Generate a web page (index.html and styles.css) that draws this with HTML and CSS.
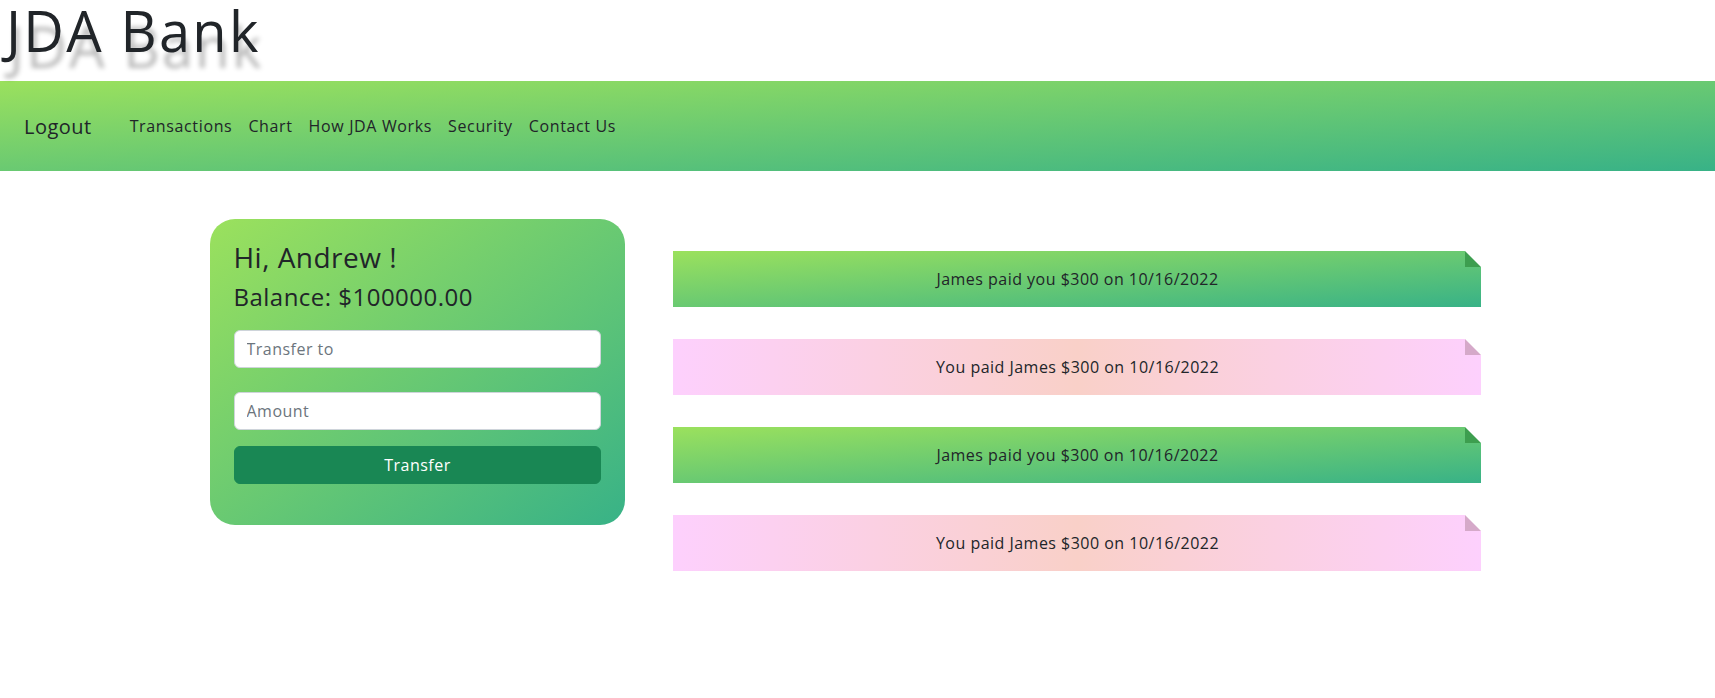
FILE: index.html
```html
<!DOCTYPE html>
<html lang="en">
<head>
<meta charset="utf-8">
<title>JDA Bank</title>
<link rel="stylesheet" href="styles.css">
</head>
<body>
  <header class="site-header">
    <h1 class="site-title">JDA Bank</h1>
  </header>
  <nav class="navbar">
    <a class="brand" href="#">Logout</a>
    <ul class="nav-links">
      <li><a class="nav-link" href="#">Transactions</a></li>
      <li><a class="nav-link" href="#">Chart</a></li>
      <li><a class="nav-link" href="#">How JDA Works</a></li>
      <li><a class="nav-link" href="#">Security</a></li>
      <li><a class="nav-link" href="#">Contact Us</a></li>
    </ul>
  </nav>
  <main class="container">
    <div class="row">
      <section class="col-side">
        <div class="account-card">
          <h3 class="greeting">Hi, Andrew !</h3>
          <h4 class="balance">Balance: $100000.00</h4>
          <form class="transfer-form">
            <input class="form-control first" type="text" placeholder="Transfer to">
            <input class="form-control second" type="text" placeholder="Amount">
            <button class="btn-transfer" type="button">Transfer</button>
          </form>
        </div>
      </section>
      <section class="col-main">
        <ul class="tx-list">
          <li class="tx tx-in">James paid you $300 on 10/16/2022</li>
          <li class="tx tx-out">You paid James $300 on 10/16/2022</li>
          <li class="tx tx-in">James paid you $300 on 10/16/2022</li>
          <li class="tx tx-out">You paid James $300 on 10/16/2022</li>
        </ul>
      </section>
    </div>
  </main>
</body>
</html>
```
FILE: styles.css
```css
* {
  box-sizing: border-box;
}

body {
  margin: 0;
  font-family: "Open Sans", "Noto Sans", sans-serif;
  color: #212529;
  background: #fff;
  letter-spacing: 0.03em;
}

.site-header {
  height: 81px;
}

.site-title {
  margin: 0;
  padding-left: 6px;
  font-size: 56px;
  font-weight: 400;
  line-height: 1.1;
  letter-spacing: 0.04em;
  color: #212529;
  text-shadow: 3px 16px 5px rgba(0, 0, 0, 0.28);
}

.navbar {
  height: 90px;
  display: flex;
  align-items: center;
  padding-left: 24px;
  background: linear-gradient(to bottom right, #9be15d, #38b287);
}

.brand {
  font-size: 20px;
  color: #212529;
  text-decoration: none;
  margin-right: 30px;
}

.nav-links {
  display: flex;
  list-style: none;
  margin: 0;
  padding: 0;
}

.nav-link {
  display: block;
  padding: 8px;
  font-size: 16px;
  letter-spacing: 0.04em;
  color: #212529;
  text-decoration: none;
}

.container {
  max-width: 1320px;
  margin: 48px auto 0;
  padding: 0 12px;
}

.row {
  display: flex;
  margin: 0 -12px;
}

.col-side {
  width: 33.3333%;
  padding: 0 12px;
}

.col-main {
  width: 66.6667%;
  padding: 0 12px;
}

.account-card {
  border-radius: 25px;
  padding: 22px 24px 41px;
  background: linear-gradient(to bottom right, #9be15d, #38b287);
}

.greeting {
  margin: 0 0 8px;
  font-size: 28px;
  font-weight: 400;
  line-height: 1.2;
}

.balance {
  margin: 0 0 19px;
  font-size: 24px;
  font-weight: 400;
  line-height: 1.2;
}

.transfer-form {
  display: flex;
  flex-direction: column;
}

.form-control {
  display: block;
  width: 100%;
  height: 38px;
  padding: 6px 12px;
  font-family: inherit;
  font-size: 16px;
  letter-spacing: 0.03em;
  color: #212529;
  background: #fff;
  border: 1px solid #ced4da;
  border-radius: 6px;
}

.form-control::placeholder {
  color: #6c757d;
}

.form-control.first {
  margin-bottom: 24px;
}

.form-control.second {
  margin-bottom: 16px;
}

.btn-transfer {
  height: 38px;
  font-family: inherit;
  font-size: 16px;
  letter-spacing: 0.03em;
  color: #fff;
  background: #198754;
  border: 1px solid #198754;
  border-radius: 6px;
}

.tx-list {
  list-style: none;
  margin: 0;
  padding: 32px 24px 0;
}

.tx {
  position: relative;
  height: 56px;
  margin-bottom: 32px;
  display: flex;
  align-items: center;
  justify-content: center;
  font-size: 16px;
  color: #212529;
}

.tx::before {
  content: "";
  position: absolute;
  top: 0;
  right: 0;
  width: 0;
  height: 0;
  border-style: solid;
  border-width: 0 16px 16px 0;
}

.tx-in {
  background: linear-gradient(to bottom right, #9be15d, #38b287);
}

.tx-in::before {
  border-color: #fff #fff #3d9e4f #3d9e4f;
}

.tx-out {
  background: linear-gradient(to right, #fdd0fd, #f9d0c8, #fdd0fd);
}

.tx-out::before {
  border-color: #fff #fff #d5a9c9 #d5a9c9;
}
```
